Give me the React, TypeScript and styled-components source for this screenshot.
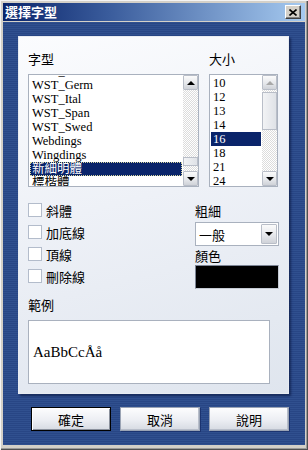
import React from 'react';
import styled, { createGlobalStyle } from 'styled-components';

const cjk = `"Noto Sans CJK TC", "Liberation Sans", sans-serif`;
const ming = `"Liberation Serif", "Noto Sans CJK TC", serif`;

const GlobalStyle = createGlobalStyle`
  html, body {
    margin: 0;
    padding: 0;
    background: #d4d0c8;
  }
  body {
    font-family: ${cjk};
  }
`;

const Window = styled.div`
  width: 308px;
  height: 450px;
  box-sizing: border-box;
  padding: 3px 3px 5px 3px;
  background: #d4d0c8;
  box-shadow: inset 1px 1px 0 #f4f4f4, inset -1px -1px 0 #505050, inset -2px -2px 0 #9a9a9a;
  display: flex;
  flex-direction: column;
`;

const TitleBar = styled.div`
  height: 18px;
  margin-bottom: 1px;
  background: linear-gradient(90deg, #0a246a 0%, #3a5c9c 35%, #a6caf0 100%);
  display: flex;
  align-items: center;
  justify-content: space-between;
  padding: 0 4px 0 2px;
`;

const TitleText = styled.span`
  color: #ffffff;
  font-family: ${cjk};
  font-weight: 700;
  font-size: 13px;
  line-height: 18px;
`;

const CloseButton = styled.div`
  width: 16px;
  height: 14px;
  box-sizing: border-box;
  background: #d4d0c8;
  border: 1px solid;
  border-color: #ffffff #404040 #404040 #ffffff;
  box-shadow: inset -1px -1px 0 #808080;
  display: flex;
  align-items: center;
  justify-content: center;
`;

const Body = styled.div`
  flex: 1;
  padding: 14px 16px 0 15px;
  background: repeating-linear-gradient(180deg, #30508f 0 1px, #284685 1px 2px);
  display: flex;
  flex-direction: column;
`;

const Panel = styled.div`
  width: 271px;
  height: 358px;
  box-sizing: border-box;
  padding: 15px 10px 10px 10px;
  background: linear-gradient(165deg, #fbfcfe 0%, #eef1f7 45%, #dfe5ee 100%);
  box-shadow: inset 0 0 0 1px #e8ecf2, 2px 2px 2px rgba(8, 20, 60, 0.6);
  display: flex;
  flex-direction: column;
`;

const Label = styled.div`
  font-family: ${cjk};
  font-size: 13px;
  line-height: 15px;
  height: 15px;
  color: #000000;
  white-space: nowrap;
`;

const ListsRow = styled.div`
  display: grid;
  grid-template-columns: 171px 69px;
  column-gap: 10px;
`;

const ListColumn = styled.div`
  display: flex;
  flex-direction: column;
  gap: 8px;
`;

const ListBox = styled.div`
  height: 113px;
  box-sizing: border-box;
  border: 1px solid #a9b1be;
  background: #ffffff;
  display: flex;
`;

const ListItems = styled.div<{ $offset: number }>`
  flex: 1;
  overflow: hidden;
  padding-top: ${(p) => p.$offset}px;
`;

const ListItems2 = styled.div<{ $shift: number }>`
  margin-top: ${(p) => p.$shift}px;
`;

const Item = styled.div<{ $selected?: boolean; $focus?: boolean }>`
  height: 14px;
  box-sizing: border-box;
  margin: 0 1px;
  padding-left: 2px;
  font-family: ${ming};
  font-size: 12.5px;
  line-height: 14px;
  white-space: nowrap;
  color: ${(p) => (p.$selected ? '#ffffff' : '#000000')};
  background: ${(p) => (p.$selected ? '#0a246a' : 'transparent')};
  outline: ${(p) => (p.$focus ? '1px dotted #d8d8a0' : 'none')};
  outline-offset: -1px;
`;

const ScrollBar = styled.div`
  width: 15px;
  display: flex;
  flex-direction: column;
  background: repeating-conic-gradient(#dcdcdc 0 25%, #ffffff 0 50%) 0 0 / 2px 2px;
`;

const ArrowButton = styled.div<{ $disabled?: boolean }>`
  width: 15px;
  height: 15px;
  box-sizing: border-box;
  border: 1px solid #b9bec8;
  border-radius: 1px;
  background: linear-gradient(180deg, #fbfbfb 0%, #e4e6ea 60%, #cfd2d8 100%);
  display: flex;
  align-items: center;
  justify-content: center;
  color: ${(p) => (p.$disabled ? '#a8a8a8' : '#000000')};
`;

const Track = styled.div`
  flex: 1;
  display: flex;
  flex-direction: column;
`;

const Thumb = styled.div<{ $top: number; $height: number }>`
  margin-top: ${(p) => p.$top}px;
  height: ${(p) => p.$height}px;
  box-sizing: border-box;
  border: 1px solid #b9bec8;
  background: linear-gradient(90deg, #f2f3f5 0%, #dfe2e7 100%);
`;

const Triangle = styled.div<{ $dir: 'up' | 'down' }>`
  width: 0;
  height: 0;
  border-left: 4px solid transparent;
  border-right: 4px solid transparent;
  ${(p) =>
    p.$dir === 'up'
      ? 'border-bottom: 4px solid currentColor;'
      : 'border-top: 4px solid currentColor;'}
`;

const OptionsRow = styled.div`
  margin-top: 16px;
  display: grid;
  grid-template-columns: 167px 84px;
  align-items: start;
`;

const CheckList = styled.div`
  display: flex;
  flex-direction: column;
  gap: 8px;
`;

const CheckRow = styled.div`
  display: flex;
  align-items: center;
  gap: 4px;
  height: 14px;
`;

const CheckBox = styled.div`
  width: 14px;
  height: 14px;
  box-sizing: border-box;
  border: 1px solid #b3bccb;
  background: #ffffff;
`;

const RightColumn = styled.div`
  display: flex;
  flex-direction: column;
`;

const Select = styled.div`
  margin-top: 4px;
  height: 24px;
  box-sizing: border-box;
  border: 1px solid #a9b1be;
  background: #ffffff;
  display: flex;
  align-items: center;
  padding: 1px 1px 1px 3px;
`;

const SelectText = styled.span`
  flex: 1;
  font-family: ${cjk};
  font-size: 13px;
  line-height: 15px;
`;

const SelectButton = styled(ArrowButton)`
  width: 16px;
  height: 20px;
`;

const Swatch = styled.div<{ $color: string }>`
  margin-top: 2px;
  height: 24px;
  box-sizing: border-box;
  border: 1px solid;
  border-color: #7c8494 #c4cad4 #c4cad4 #7c8494;
  background: ${(p) => p.$color};
`;

const SampleLabel = styled(Label)`
  margin-top: 8px;
`;

const SampleBox = styled.div`
  margin-top: 8px;
  width: 242px;
  height: 64px;
  box-sizing: border-box;
  border: 1px solid #a9b1be;
  background: #ffffff;
  display: flex;
  align-items: center;
  padding-left: 4px;
  font-family: ${ming};
  font-size: 15px;
  color: #000000;
`;

const ButtonRow = styled.div`
  margin: 13px 0 0 13px;
  display: flex;
  gap: 9px;
`;

const Button = styled.div<{ $default?: boolean }>`
  width: 80px;
  height: 24px;
  box-sizing: border-box;
  border: 1px solid ${(p) => (p.$default ? '#000000' : '#9aa3b4')};
  background: linear-gradient(180deg, #fdfdfe 0%, #eceef3 55%, #d6dae2 100%);
  box-shadow: ${(p) =>
    p.$default
      ? 'inset 1px 1px 0 #ffffff, inset -1px -1px 0 #8a909c'
      : 'inset -1px -1px 0 #b8beca, 1px 1px 0 #1c3470'};
  display: flex;
  align-items: center;
  justify-content: center;
  font-family: ${cjk};
  font-size: 13px;
  color: #000000;
`;

const fonts = [
  'WST_Fren',
  'WST_Germ',
  'WST_Ital',
  'WST_Span',
  'WST_Swed',
  'Webdings',
  'Wingdings',
  '新細明體',
  '標楷體',
];
const sizes = ['10', '12', '13', '14', '16', '18', '21', '24'];
const effects = ['斜體', '加底線', '頂線', '刪除線'];

function ScrollArrows({ thumbTop, thumbHeight, upDisabled }: { thumbTop: number; thumbHeight: number; upDisabled?: boolean }) {
  return (
    <ScrollBar>
      <ArrowButton $disabled={upDisabled}>
        <Triangle $dir="up" />
      </ArrowButton>
      <Track>
        <Thumb $top={thumbTop} $height={thumbHeight} />
      </Track>
      <ArrowButton>
        <Triangle $dir="down" />
      </ArrowButton>
    </ScrollBar>
  );
}

export default function App() {
  return (
    <>
      <GlobalStyle />
      <Window>
        <TitleBar>
          <TitleText>選擇字型</TitleText>
          <CloseButton>
            <svg width="8" height="7" viewBox="0 0 8 7">
              <path d="M0.5 0.5 L7.5 6.5 M7.5 0.5 L0.5 6.5" stroke="#000" strokeWidth="1.6" />
            </svg>
          </CloseButton>
        </TitleBar>
        <Body>
          <Panel>
            <ListsRow>
              <ListColumn>
                <Label>字型</Label>
                <ListBox>
                  <ListItems $offset={0}>
                    <ListItems2 $shift={-11}>
                      {fonts.map((f) => (
                        <Item key={f} $selected={f === '新細明體'} $focus={f === '新細明體'}>
                          {f}
                        </Item>
                      ))}
                    </ListItems2>
                  </ListItems>
                  <ScrollArrows thumbTop={67} thumbHeight={9} />
                </ListBox>
              </ListColumn>
              <ListColumn>
                <Label>大小</Label>
                <ListBox>
                  <ListItems $offset={1}>
                    <ListItems2 $shift={0}>
                      {sizes.map((s) => (
                        <Item key={s} $selected={s === '16'}>
                          {s}
                        </Item>
                      ))}
                    </ListItems2>
                  </ListItems>
                  <ScrollArrows thumbTop={2} thumbHeight={38} upDisabled />
                </ListBox>
              </ListColumn>
            </ListsRow>

            <OptionsRow>
              <CheckList>
                {effects.map((e) => (
                  <CheckRow key={e}>
                    <CheckBox />
                    <Label>{e}</Label>
                  </CheckRow>
                ))}
              </CheckList>
              <RightColumn>
                <Label>粗細</Label>
                <Select>
                  <SelectText>一般</SelectText>
                  <SelectButton>
                    <Triangle $dir="down" />
                  </SelectButton>
                </Select>
                <Label style={{ marginTop: 2 }}>顏色</Label>
                <Swatch $color="#000000" />
              </RightColumn>
            </OptionsRow>

            <SampleLabel>範例</SampleLabel>
            <SampleBox>AaBbCcÅå</SampleBox>
          </Panel>
          <ButtonRow>
            <Button $default>確定</Button>
            <Button>取消</Button>
            <Button>說明</Button>
          </ButtonRow>
        </Body>
      </Window>
    </>
  );
}
